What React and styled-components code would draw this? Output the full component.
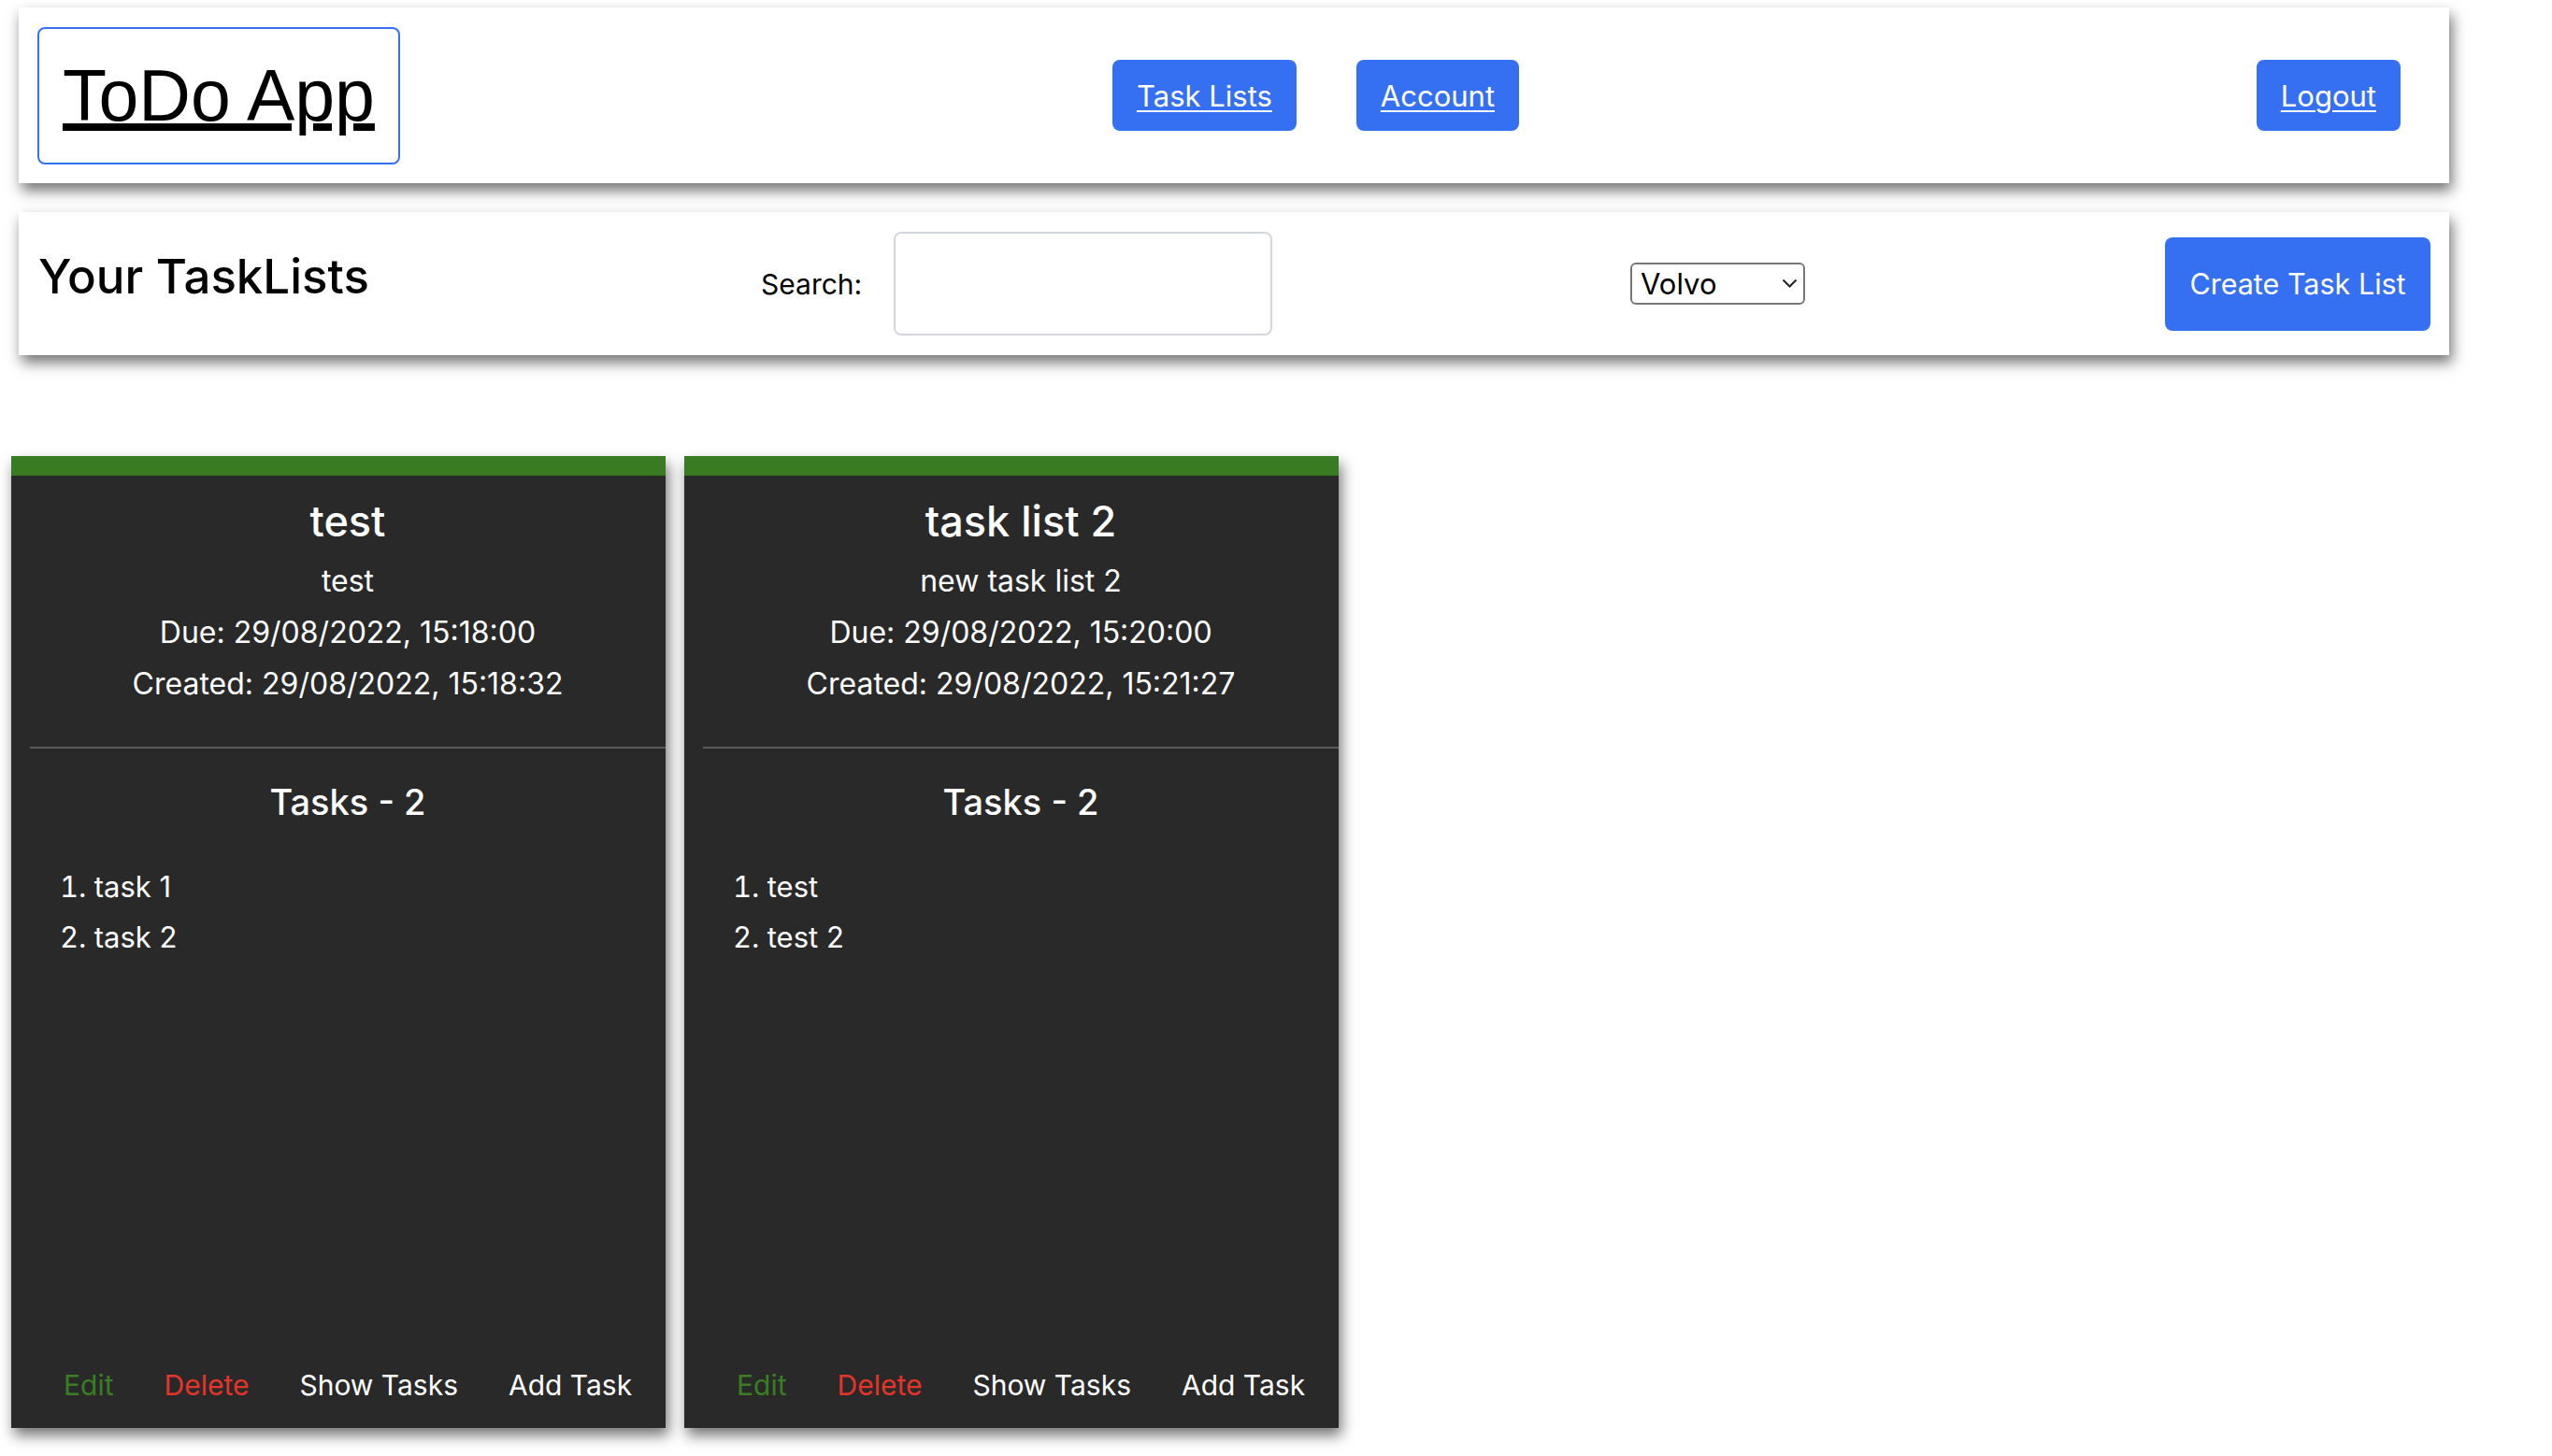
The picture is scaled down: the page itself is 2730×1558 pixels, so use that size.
import React from "react";
import styled, { createGlobalStyle } from "styled-components";

const GlobalStyle = createGlobalStyle`
  html, body {
    margin: 0;
    padding: 0;
    background: #ffffff;
  }
  body {
    font-family: Inter, "Noto Sans", "Liberation Sans", sans-serif;
    color: #000;
  }
  * { box-sizing: border-box; }
`;

const BLUE = "#3570f3";
const GREEN = "#387b23";
const SHADOW = "3px 8px 14px rgba(0, 0, 0, 0.55)";

const Page = styled.div`
  padding-top: 8px;
  padding-bottom: 30px;
`;

const Header = styled.header`
  margin-left: 20px;
  width: 2600px;
  height: 188px;
  display: flex;
  align-items: center;
  padding: 0 52px 0 20px;
  background: #fff;
  box-shadow: ${SHADOW};
`;

const LogoBox = styled.a`
  width: 388px;
  height: 147px;
  display: flex;
  align-items: center;
  padding-left: 25px;
  border: 2px solid #3571f2;
  border-radius: 8px;
  font-family: "Liberation Sans", Arial, sans-serif;
  font-size: 77px;
  letter-spacing: 0;
  color: #000;
  text-decoration: underline;
  text-decoration-thickness: 8px;
  text-underline-offset: 3px;
`;

const Nav = styled.nav`
  display: flex;
  gap: 64px;
  margin-left: 762px;
`;

const NavButton = styled.a`
  display: flex;
  align-items: center;
  justify-content: center;
  height: 76px;
  padding: 0 26px;
  background: ${BLUE};
  color: #fff;
  border-radius: 8px;
  font-size: 31px;
  text-decoration: underline;
  text-decoration-thickness: 2px;
  text-underline-offset: 4px;
  margin-left: ${(p) => (p.$pushRight ? "auto" : "0")};
`;

const Toolbar = styled.section`
  margin: 31px 0 0 20px;
  width: 2600px;
  height: 153px;
  display: grid;
  grid-template-columns: 773px 930px 572px 284px;
  align-items: center;
  padding: 0 20px 0 21px;
  background: #fff;
  box-shadow: ${SHADOW};
`;

const PageTitle = styled.h2`
  margin: 0 0 15px;
  font-size: 51px;
  line-height: 62px;
  font-weight: 500;
  color: #000;
`;

const SearchGroup = styled.label`
  display: flex;
  align-items: center;
  gap: 34px;
  font-size: 30px;
  color: #000;
`;

const SearchInput = styled.input`
  width: 405px;
  height: 111px;
  border: 2px solid #d3d7dd;
  border-radius: 8px;
  background: #fff;
  outline: none;
`;

const SelectWrap = styled.div`
  position: relative;
  width: 187px;
  height: 45px;
`;

const Select = styled.select`
  appearance: none;
  -webkit-appearance: none;
  width: 100%;
  height: 100%;
  padding: 0 0 0 9px;
  border: 2px solid #767676;
  border-radius: 6px;
  background: #fff;
  font-family: Inter, "Noto Sans", sans-serif;
  font-size: 31px;
  color: #000;
`;

const Chevron = styled.svg`
  position: absolute;
  right: 8px;
  top: 17px;
  width: 17px;
  height: 11px;
  pointer-events: none;
`;

const CreateButton = styled.button`
  width: 284px;
  height: 100px;
  border: none;
  border-radius: 8px;
  background: ${BLUE};
  color: #fff;
  font-family: Inter, "Noto Sans", sans-serif;
  font-size: 30.5px;
`;

const Cards = styled.main`
  margin-top: 108px;
  padding-left: 12px;
  display: flex;
  gap: 20px;
`;

const Card = styled.article`
  width: 700px;
  height: 1040px;
  display: flex;
  flex-direction: column;
  padding-left: 20px;
  border-top: 21px solid ${GREEN};
  background: #292929;
  color: #fff;
  box-shadow: ${SHADOW};
`;

const CardHead = styled.div`
  padding-top: 18px;
  text-align: center;
`;

const CardTitle = styled.h3`
  margin: 0;
  font-size: 45px;
  line-height: 62px;
  font-weight: 500;
`;

const InfoLine = styled.p`
  margin: 0;
  font-size: 32px;
  line-height: 55px;
  &:first-of-type {
    margin-top: 5px;
  }
`;

const Divider = styled.hr`
  margin: 40px 0 0;
  height: 2px;
  border: none;
  background: #5b5b5b;
`;

const TasksHeading = styled.h4`
  margin: 32px 0 0;
  text-align: center;
  font-size: 38px;
  line-height: 50px;
  font-weight: 500;
`;

const TaskList = styled.ol`
  flex: 1;
  margin: 39px 0 0;
  padding-left: 32px;
  list-style-position: inside;
`;

const TaskItem = styled.li`
  font-size: 31px;
  line-height: 54px;
`;

const CardFooter = styled.div`
  display: flex;
  gap: 54px;
  padding: 0 0 19px 36px;
  font-size: 30px;
  line-height: 54px;
`;

const FooterLink = styled.span`
  color: ${(p) =>
    p.$tone === "edit" ? "#3b7d25" : p.$tone === "delete" ? "#e5352b" : "#ffffff"};
`;

const lists = [
  {
    title: "test",
    desc: "test",
    due: "29/08/2022, 15:18:00",
    created: "29/08/2022, 15:18:32",
    tasks: ["task 1", "task 2"],
  },
  {
    title: "task list 2",
    desc: "new task list 2",
    due: "29/08/2022, 15:20:00",
    created: "29/08/2022, 15:21:27",
    tasks: ["test", "test 2"],
  },
];

export default function App() {
  return (
    <Page>
      <GlobalStyle />
      <Header>
        <LogoBox href="#">ToDo App</LogoBox>
        <Nav>
          <NavButton href="#">Task Lists</NavButton>
          <NavButton href="#">Account</NavButton>
        </Nav>
        <NavButton href="#" $pushRight>
          Logout
        </NavButton>
      </Header>

      <Toolbar>
        <PageTitle>Your TaskLists</PageTitle>
        <SearchGroup>
          Search:
          <SearchInput type="text" />
        </SearchGroup>
        <SelectWrap>
          <Select defaultValue="volvo">
            <option value="volvo">Volvo</option>
            <option value="saab">Saab</option>
          </Select>
          <Chevron viewBox="0 0 17 11" fill="none">
            <path d="M1.5 1.5 L8.5 8.5 L15.5 1.5" stroke="#222" strokeWidth="2" />
          </Chevron>
        </SelectWrap>
        <CreateButton>Create Task List</CreateButton>
      </Toolbar>

      <Cards>
        {lists.map((l) => (
          <Card key={l.title}>
            <CardHead>
              <CardTitle>{l.title}</CardTitle>
              <InfoLine>{l.desc}</InfoLine>
              <InfoLine>Due: {l.due}</InfoLine>
              <InfoLine>Created: {l.created}</InfoLine>
            </CardHead>
            <Divider />
            <TasksHeading>Tasks - {l.tasks.length}</TasksHeading>
            <TaskList>
              {l.tasks.map((t) => (
                <TaskItem key={t}>{t}</TaskItem>
              ))}
            </TaskList>
            <CardFooter>
              <FooterLink $tone="edit">Edit</FooterLink>
              <FooterLink $tone="delete">Delete</FooterLink>
              <FooterLink>Show Tasks</FooterLink>
              <FooterLink>Add Task</FooterLink>
            </CardFooter>
          </Card>
        ))}
      </Cards>
    </Page>
  );
}
